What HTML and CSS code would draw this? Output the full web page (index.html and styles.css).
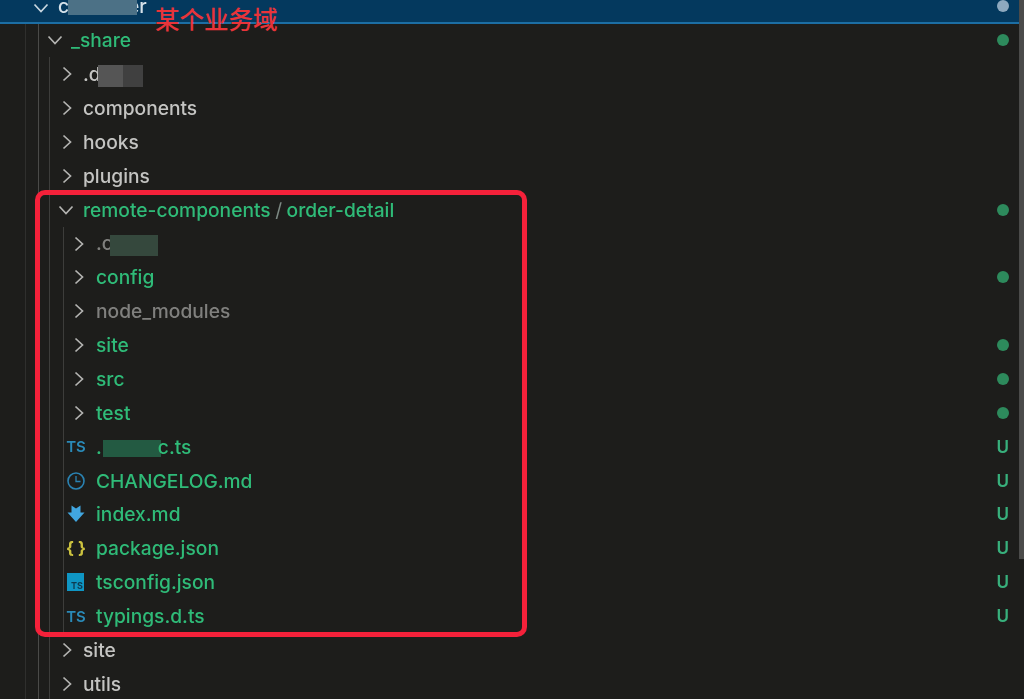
FILE: index.html
```html
<!DOCTYPE html>
<html lang="zh">
<head>
<meta charset="utf-8">
<title>Explorer</title>
<link rel="stylesheet" href="styles.css">
</head>
<body>
<svg class="defs" width="0" height="0" aria-hidden="true">
  <symbol id="right" viewBox="0 0 12 16"><path d="M2.500 1.500l7 6.500-7 6.500" fill="none" stroke="currentColor" stroke-width="1.7"/></symbol>
  <symbol id="down" viewBox="0 0 16 12"><path d="M1.500 2.500l6.500 7 6.500-7" fill="none" stroke="currentColor" stroke-width="1.700"/></symbol>
</svg>
<div class="tree">
  <div class="head">
    <svg class="chev-d root-chev"><use href="#down"/></svg>
    <span class="name root-name">c<i class="mask mask-head"></i>er</span>
    <span class="dot dot-grey"></span>
  </div>
  <div class="guide g0">
    <div class="guide g1">
      <div class="row">
        <svg class="chev-d share-chev"><use href="#down"/></svg>
        <span class="name green">_share</span>
        <span class="dot"></span>
      </div>
      <div class="guide g2">
        <div class="row"><svg class="chev"><use href="#right"/></svg><span class="name">.d<i class="mask mask-d"></i></span></div>
        <div class="row"><svg class="chev"><use href="#right"/></svg><span class="name">components</span></div>
        <div class="row"><svg class="chev"><use href="#right"/></svg><span class="name">hooks</span></div>
        <div class="row"><svg class="chev"><use href="#right"/></svg><span class="name">plugins</span></div>
        <div class="row">
          <svg class="chev-d"><use href="#down"/></svg>
          <span class="name green">remote-components<b class="slash">/</b>order-detail</span>
          <span class="dot"></span>
        </div>
        <div class="guide g3">
          <div class="row"><svg class="chev"><use href="#right"/></svg><span class="name dim">.c<i class="mask mask-c"></i></span></div>
          <div class="row"><svg class="chev"><use href="#right"/></svg><span class="name green">config</span><span class="dot"></span></div>
          <div class="row"><svg class="chev"><use href="#right"/></svg><span class="name dim">node_modules</span></div>
          <div class="row"><svg class="chev"><use href="#right"/></svg><span class="name green">site</span><span class="dot"></span></div>
          <div class="row"><svg class="chev"><use href="#right"/></svg><span class="name green">src</span><span class="dot"></span></div>
          <div class="row"><svg class="chev"><use href="#right"/></svg><span class="name green">test</span><span class="dot"></span></div>
          <div class="row">
            <span class="ico ts">TS</span>
            <span class="name green">.<i class="mask mask-ts"></i>c.ts</span><span class="u">U</span>
          </div>
          <div class="row">
            <svg class="ico" viewBox="0 0 20 20"><circle cx="10" cy="10" r="8" fill="none" stroke="#2a83b3" stroke-width="1.6"/><path d="M10 5V10.500H14.500" fill="none" stroke="#2a83b3" stroke-width="1.3"/></svg>
            <span class="name green">CHANGELOG.md</span><span class="u">U</span>
          </div>
          <div class="row">
            <svg class="ico" viewBox="0 0 20 20"><path d="M5.500 1.500l4.500 3 4.500-3v7h4L10 18 1.500 8.500h4z" fill="#41a6e0"/></svg>
            <span class="name green">index.md</span><span class="u">U</span>
          </div>
          <div class="row">
            <span class="ico braces">{ }</span>
            <span class="name green">package.json</span><span class="u">U</span>
          </div>
          <div class="row">
            <span class="ico tsbox">TS</span>
            <span class="name green">tsconfig.json</span><span class="u">U</span>
          </div>
          <div class="row">
            <span class="ico ts">TS</span>
            <span class="name green">typings.d.ts</span><span class="u">U</span>
          </div>
        </div>
        <div class="row"><svg class="chev"><use href="#right"/></svg><span class="name">site</span></div>
        <div class="row"><svg class="chev"><use href="#right"/></svg><span class="name">utils</span></div>
      </div>
    </div>
  </div>
</div>
<div class="scrollbar"></div>
<div class="redbox"></div>
<div class="label">某个业务域</div>
</body>
</html>
```
FILE: styles.css
```css
* { box-sizing: border-box; }
html, body { margin: 0; height: 699px; overflow: hidden; background: #1d1d1b; }
body { position: relative; font-family: Inter, "Noto Sans", sans-serif; }
.defs { position: absolute; }
.tree { filter: blur(0.5px); }
.row { display: flex; align-items: center; height: 33.87px; color: #c4c4c2; font-size: 19.2px; font-weight: 500; }
.name { white-space: nowrap; }
.green { color: #2fbb78; }
.dim { color: #80807e; }
.head { display: flex; align-items: flex-start; height: 23.5px; background: #04395e; border-bottom: 2px solid #1c6ea4; padding-left: 33px; font-size: 19.2px; font-weight: 500; }
.root-name { display: block; height: 14px; line-height: 12px; color: #d6e2ea; }
.mask { display: inline-block; vertical-align: middle; }
.mask-head { width: 69px; height: 15px; background: #4c7186; margin: 0 -9px 0 -1px; position: relative; z-index: 1; }
.mask-d { width: 25px; height: 22px; background: #555; margin-left: -3px; box-shadow: 20px 0 0 #404040; }
.mask-c { width: 48px; height: 21px; background: #35483d; margin-left: -3px; }
.mask-ts { width: 58px; height: 17px; background: #235a42; margin-left: 1px; margin-right: -3px; }
.chev { width: 12px; height: 16px; color: #b4b4b2; margin-left: 11px; margin-right: 10px; flex: none; }
.chev-d { width: 16px; height: 12px; color: #b4b4b2; margin-left: 8px; margin-right: 9px; flex: none; }
.root-chev { margin-left: 0; margin-top: 2px; color: #c9d7e0; }
.share-chev { margin-left: 8px; margin-right: 8px; }
.guide { border-left: 1px solid #3a3a38; }
.g0 { margin-left: 25px; height: 676px; border-left-color: #2f2f2d; }
.g1 { margin-left: 12px; border-left-color: #4a4a48; }
.g2 { margin-left: 10px; border-left-color: #3d3d3b; }
.g3 { margin-left: 13px; border-left-color: #3d3d3b; }
.g3 .chev { margin-left: 9px; margin-right: 11px; }
.slash { font-weight: 400; margin: 0 4.500px; color: #7d8a84; }
.dot { flex: none; width: 12px; height: 12px; margin-left: auto; margin-right: 15px; border-radius: 50%; background: #2d8a5c; }
.dot-grey { background: #8ea9bf; }
.u { margin-left: auto; margin-right: 15px; flex: none; color: #38b07c; font-size: 17px; font-weight: 600; }
.ico { width: 20px; height: 20px; margin-left: 2px; margin-right: 10px; flex: none; display: flex; align-items: center; justify-content: center; }
.ts { color: #2a8ab8; font-size: 15px; font-weight: 600; }
.braces { color: #cbc23f; font-size: 17px; font-weight: 700; }
.tsbox { width: 17px; height: 18px; margin-left: 3px; margin-right: 12px; background: #0f96c4; color: #0e3b50; font-size: 9px; font-weight: 700; align-items: flex-end; justify-content: flex-end; padding-right: 1px; }
.scrollbar { position: absolute; right: 0; top: 0; width: 5px; height: 559px; background: #4b4b4a; }
.redbox { position: absolute; left: 35px; top: 190px; width: 492px; height: 447px; border: 5px solid #f5213a; border-radius: 10px; }
.label { position: absolute; left: 155px; top: 3px; color: #e8343a; font-family: "Noto Sans CJK SC", sans-serif; font-size: 24.5px; font-weight: 500; line-height: 32px; white-space: nowrap; }
```
